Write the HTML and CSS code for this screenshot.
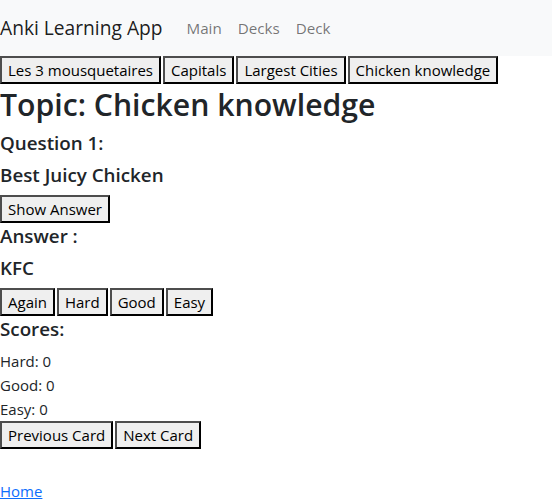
FILE: index.html
```html
<!DOCTYPE html>
<html lang="en">
<head>
<meta charset="utf-8">
<title>Anki Learning App</title>
<link rel="stylesheet" href="styles.css">
</head>
<body>
<nav class="navbar">
  <a class="brand" href="#">Anki Learning App</a>
  <ul class="nav">
    <li><a class="nav-link" href="#">Main</a></li>
    <li><a class="nav-link" href="#">Decks</a></li>
    <li><a class="nav-link" href="#">Deck</a></li>
  </ul>
</nav>
<div class="btn-row">
  <button class="btn">Les 3 mousquetaires</button>
  <button class="btn">Capitals</button>
  <button class="btn">Largest Cities</button>
  <button class="btn">Chicken knowledge</button>
</div>
<h1 class="topic">Topic: Chicken knowledge</h1>
<h5 class="sub">Question 1:</h5>
<h5 class="sub">Best Juicy Chicken</h5>
<div class="btn-row">
  <button class="btn">Show Answer</button>
</div>
<h5 class="sub">Answer :</h5>
<h5 class="sub">KFC</h5>
<div class="btn-row">
  <button class="btn">Again</button>
  <button class="btn">Hard</button>
  <button class="btn">Good</button>
  <button class="btn">Easy</button>
</div>
<h5 class="sub">Scores:</h5>
<div class="score">Hard: 0</div>
<div class="score">Good: 0</div>
<div class="score">Easy: 0</div>
<div class="btn-row">
  <button class="btn">Previous Card</button>
  <button class="btn">Next Card</button>
</div>
<p class="footer"><a class="home" href="#">Home</a></p>
</body>
</html>
```
FILE: styles.css
```css
* { box-sizing: border-box; }
html, body { margin: 0; padding: 0; }
body {
  font-family: "Open Sans", "Noto Sans", sans-serif;
  font-size: 15px;
  line-height: 24px;
  color: #212529;
  background: #fff;
}
.navbar {
  display: flex;
  align-items: center;
  background: #f8f9fa;
  padding: 8px 0;
  height: 56px;
}
.brand {
  font-size: 19.2px;
  line-height: 30px;
  padding: 5px 0;
  margin-right: 16px;
  color: rgba(0,0,0,0.9);
  text-decoration: none;
}
.nav {
  display: flex;
  list-style: none;
  margin: 0;
  padding: 0;
}
.nav-link {
  display: block;
  padding: 8px;
  font-size: 15.2px;
  color: rgba(0,0,0,0.55);
  text-decoration: none;
}
.btn-row {
  display: flex;
  align-items: flex-start;
  gap: 2px;
  height: 29px;
}
.btn {
  font-family: inherit;
  font-size: 15px;
  line-height: 22px;
  color: #000;
  background: #efefef;
  padding: 1px 6px;
  margin: 0;
  border-width: 2px;
  border-style: solid;
  border-color: #4d4d4d #000 #000 #4d4d4d;
  height: 28px;
}
.topic {
  font-size: 30.2px;
  font-weight: 600;
  line-height: 36px;
  margin: 2px 0 8px;
}
.sub {
  font-size: 18.8px;
  font-weight: 600;
  line-height: 24px;
  margin: 0 0 8px;
}
.score { line-height: 24px; }
.footer { margin: 29px 0 0; line-height: 24px; }
.home { color: #0d6efd; text-decoration: underline; }
```
